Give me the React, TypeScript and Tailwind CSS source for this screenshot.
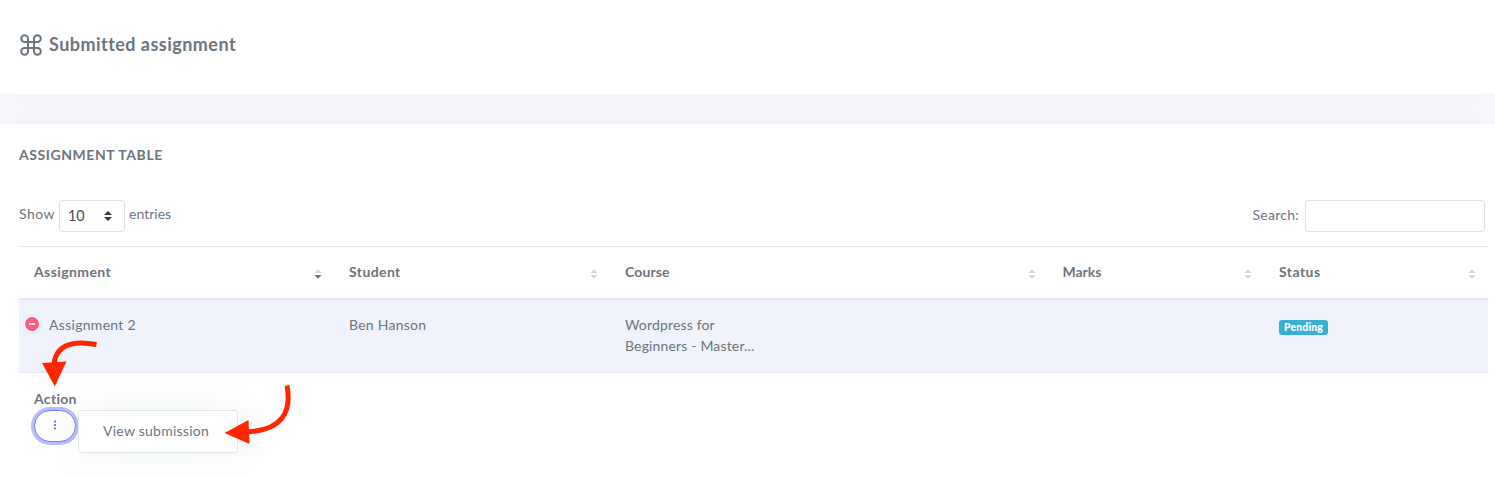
import React from "react";

function CommandIcon() {
  return (
    <svg width="22" height="22" viewBox="0 0 22 22" fill="none" stroke="currentColor" strokeWidth="2" className="-ml-px mr-px mt-px shrink-0">
      <path d="M8 8V4.600A3.400 3.400 0 1 0 4.600 8H17.400A3.400 3.400 0 1 0 14 4.600V17.400A3.400 3.400 0 1 0 17.400 14H4.600A3.400 3.400 0 1 0 8 17.400Z" />
    </svg>
  );
}

function SortIcon({ active = false }: { active?: boolean }) {
  return (
    <svg width="8" height="10" viewBox="0 0 8 10" className="mt-[3px] shrink-0">
      <path d="M4 0.2 7.6 4.1H0.4Z" fill="#d3d6d8" />
      <path d="M0.4 5.9H7.6L4 9.8Z" fill={active ? "#6c757d" : "#d3d6d8"} />
    </svg>
  );
}

const columns = [
  { label: "Assignment", spacing: "tracking-[0.4px]" },
  { label: "Student", spacing: "tracking-[0.4px]" },
  { label: "Course", spacing: "tracking-[0.12px]" },
  { label: "Marks", spacing: "tracking-[-0.05px]" },
  { label: "Status", spacing: "tracking-[0.45px]" },
];

const grid = "grid grid-cols-[315px_276px_437.5px_216.5px_224px]";

export default function App() {
  return (
    <div className="relative flex h-[478px] w-[1495px] flex-col overflow-hidden bg-[#fafbfe] font-['Lato','Noto_Sans',sans-serif] text-[14px] leading-[21px] tracking-[0.25px] text-[#6c757d]">
      <header className="flex h-[94px] shrink-0 items-start bg-white pl-[21px] pt-[33px] shadow-[0_0_35px_rgba(154,161,171,0.15)]">
        <CommandIcon />
        <h1 className="ml-[6px] text-[18px] font-bold leading-[22px] tracking-[0.46px]">Submitted assignment</h1>
      </header>

      <main className="relative mt-[30px] h-[354px] shrink-0 bg-white pl-[19px] pt-5 shadow-[0_0_35px_rgba(154,161,171,0.15)]">
        <h2 className="text-[14px] font-bold leading-[21px] tracking-[0.56px]">ASSIGNMENT TABLE</h2>

        <div className="mt-[35px] flex h-8 w-[1466px] items-center justify-between">
          <div className="flex h-8 items-center">
            <span className="-mt-[5px] w-10 tracking-[0.5px]">Show</span>
            <div className="flex h-8 w-[66px] items-center justify-between rounded-[3px] border border-[#dee2e6] pl-2 pr-3 text-[14.4px] tracking-normal text-[#495057]">
              <span className="-mt-px">10</span>
              <svg width="8" height="10" viewBox="0 0 8 10">
                <path d="M4 0 8 4H0ZM0 6H8L4 10Z" fill="#343a40" />
              </svg>
            </div>
            <span className="-mt-[5px] ml-1 tracking-[0.02px]">entries</span>
          </div>
          <label className="flex items-center">
            <span className="-mt-[3px] mr-[6px]">Search:</span>
            <input className="h-8 w-[180px] rounded-[3px] border border-[#dee2e6] bg-white px-2 outline-none" />
          </label>
        </div>

        <div className="mt-[14px] w-[1469px] border-t border-[#e3eaef]">
          <div className={grid + " h-[53px] border-b-2 border-[#e3eaef]"}>
            {columns.map((c, i) => (
              <div key={c.label} className="flex items-center justify-between pl-[15px] pr-3">
                <span className={"-mt-[2px] font-bold " + c.spacing}>{c.label}</span>
                <SortIcon active={i === 0} />
              </div>
            ))}
          </div>
          <div className={grid + " h-[73px] border-b border-[#e3eaef] bg-[#f0f3fb]"}>
            <div className="flex items-start pl-[5px] pt-[14px]">
              <span className="mt-[2px] flex size-4 items-center justify-center rounded-full bg-white shadow-[0_0_3px_rgba(68,68,68,0.12)]">
                <span className="flex size-[14px] items-center justify-center rounded-full bg-[#fa5c7c]">
                  <span className="h-[1.5px] w-[6px] bg-white/90" />
                </span>
              </span>
              <span className="ml-[9px] tracking-[0.3px]">Assignment 2</span>
            </div>
            <div className="pl-[15px] pt-[14px]">Ben Hanson</div>
            <div className="pl-[15px] pt-[14px] tracking-[0.16px]">Wordpress for<br />Beginners - Master...</div>
            <div />
            <div className="pl-[15px] pt-5">
              <span className="block h-[15px] w-[49px] rounded-[3px] bg-[#39afd1] text-center text-[10.5px] font-black leading-[14px] tracking-[0.1px] text-white">Pending</span>
            </div>
          </div>
          <div className="pl-[15px] pt-[15px]">
            <div className="font-bold tracking-[0.3px]">Action</div>
            <div className="relative mt-px flex">
              <button className="flex h-8 w-[42px] items-center justify-center rounded-full border border-[#727cf5] bg-white shadow-[0_0_0_3px_#b9bdfa]">
                <svg width="2" height="10" viewBox="0 0 2 10" fill="#727cf5" className="-mt-[3px]">
                  <path d="M0 0.500H2V2.500H0ZM0 4H2V6H0ZM0 7.500H2V9.500H0Z" />
                </svg>
              </button>
              <div className="absolute left-[44px] top-0 h-[43px] w-[160px] rounded-[3px] border border-[#dfe7ed] bg-white pl-6 pt-[9px] shadow-[0_0_35px_rgba(154,161,171,0.15)]">
                View submission
              </div>
            </div>
          </div>
        </div>
      </main>

      <svg className="pointer-events-none absolute left-0 top-0" width="1495" height="478" viewBox="0 0 1495 478">
        <path d="M96.5 344.5C72 340 56 345 54 364" fill="none" stroke="#ff2600" strokeWidth="5" />
        <path d="M42 363 66.500 361.500 54.800 386.500Z" fill="#ff2600" />
        <path d="M287 385.500C292 412 282 430 247 432" fill="none" stroke="#ff2600" strokeWidth="5" />
        <path d="M224.500 433 248.500 420 249.500 444Z" fill="#ff2600" />
      </svg>
    </div>
  );
}
